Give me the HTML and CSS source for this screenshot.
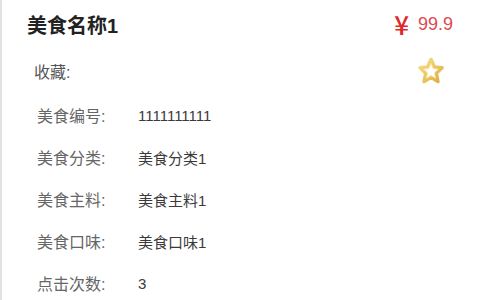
FILE: index.html
```html
<!DOCTYPE html>
<html lang="zh-CN">
<head>
    <meta charset="UTF-8">
    <meta name="viewport" content="width=device-width, initial-scale=1.0">
    <title>美食详情</title>
    <link rel="stylesheet" href="styles.css">
</head>
<body>
    <div class="detail">
        <div class="head">
            <h2 class="food-name">美食名称1</h2>
            <div class="price"><span class="yen">¥</span><span class="num">99.9</span></div>
        </div>
        <div class="fav">
            <span>收藏:</span>
            <svg class="star" width="28" height="30" viewBox="0 0 28 30">
                <defs>
                    <linearGradient id="gold" x1="0" y1="0" x2="1" y2="1">
                        <stop offset="0" stop-color="#f9e08a"/>
                        <stop offset="1" stop-color="#dcae3e"/>
                    </linearGradient>
                </defs>
                <path d="M14 3.5 L17.3 11 L25 11.8 L19.2 17.2 L20.9 25.5 L14 21.3 L7.1 25.5 L8.8 17.2 L3 11.8 L10.7 11 Z"
                      fill="#fff" stroke="url(#gold)" stroke-width="3.6" stroke-linejoin="round"/>
                <path d="M14 7.5 L16.2 12.8 L21.3 13.3 L17.4 16.9 L18.5 22.2 L14 19.5 L9.5 22.2 L10.6 16.9 L6.7 13.3 L11.8 12.8 Z"
                      fill="none" stroke="#fbeebb" stroke-width="0.8" stroke-linejoin="round"/>
            </svg>
        </div>
        <div class="info">
            <div class="row"><span class="label">美食编号:</span><span class="value">1111111111</span></div>
            <div class="row"><span class="label">美食分类:</span><span class="value">美食分类1</span></div>
            <div class="row"><span class="label">美食主料:</span><span class="value">美食主料1</span></div>
            <div class="row"><span class="label">美食口味:</span><span class="value">美食口味1</span></div>
            <div class="row"><span class="label">点击次数:</span><span class="value">3</span></div>
        </div>
    </div>
</body>
</html>
```

FILE: styles.css
```css
body {
    margin: 0;
    background-color: #fff;
    font-family: "Liberation Sans", "Noto Sans CJK SC", sans-serif;
}
.detail {
    border-left: 2px solid #e2e2e2;
    min-height: 300px;
    padding: 0 27px 0 25px;
    box-sizing: border-box;
}
.head {
    display: flex;
    justify-content: space-between;
    align-items: center;
    height: 48px;
}
.food-name {
    margin: 0;
    font-size: 20px;
    font-weight: bold;
    color: #222;
}
.price {
    display: flex;
    align-items: center;
    color: #e02828;
}
.yen {
    font-family: "Noto Sans CJK SC", sans-serif;
    font-size: 26px;
    font-weight: 500;
    line-height: 1;
}
.num {
    font-size: 18px;
    margin-left: 9px;
    color: #e0484e;
}
.fav {
    display: flex;
    justify-content: space-between;
    align-items: center;
    height: 46px;
    padding-left: 7px;
    font-size: 16px;
    color: #555;
}
.star {
    margin-right: 8px;
}
.row {
    display: flex;
    align-items: center;
    height: 42px;
    padding-left: 10px;
    font-size: 16px;
}
.label {
    width: 101px;
    color: #666;
}
.value {
    font-size: 15px;
    color: #3a3a3a;
}
```
